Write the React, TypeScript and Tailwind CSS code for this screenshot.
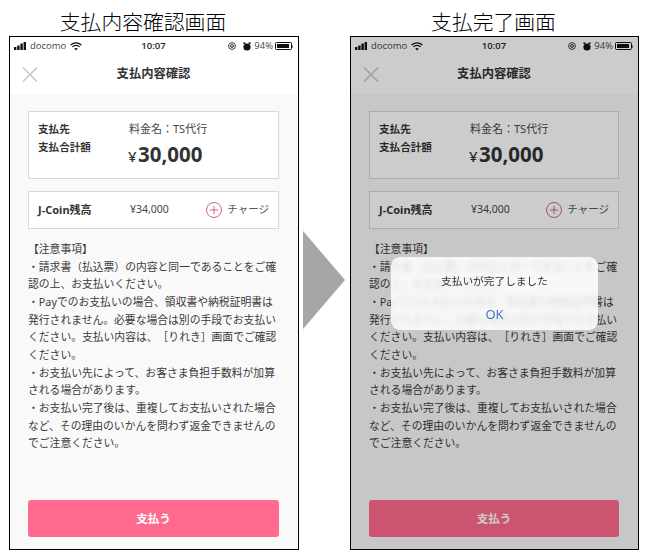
const FONT = "font-['Noto_Sans','Noto_Sans_CJK_JP',sans-serif]";

const NOTES = [
  '【注意事項】',
  '・請求書（払込票）の内容と同一であることをご確認の上、お支払いください。',
  '・Payでのお支払いの場合、領収書や納税証明書は発行されません。必要な場合は別の手段でお支払いください。支払い内容は、［りれき］画面でご確認ください。',
  '・お支払い先によって、お客さま負担手数料が加算される場合があります。',
  '・お支払い完了後は、重複してお支払いされた場合など、その理由のいかんを問わず返金できませんのでご注意ください。',
];

function StatusBar() {
  return (
    <div className="h-[18px] px-[4px] grid grid-cols-[1fr_auto_1fr] items-center text-[9.5px] text-[#444] font-['Open_Sans',sans-serif]">
      <div className="flex items-center gap-[2px]">
        <svg width="14" height="8" viewBox="0 0 14 8" fill="#111">
          <rect x="0" y="5" width="2.4" height="3" />
          <rect x="3.2" y="3.5" width="2.4" height="4.5" />
          <rect x="6.4" y="1.5" width="2.4" height="6.5" />
          <rect x="9.6" y="0" width="2.4" height="8" />
        </svg>
        <span>docomo</span>
        <svg width="12" height="9" viewBox="0 0 12 9" fill="none" stroke="#111" className="ml-[2px]">
          <path d="M0.6 3 Q6 -1.2 11.4 3" strokeWidth="1.4" />
          <path d="M2.4 4.8 Q6 2 9.6 4.8" strokeWidth="1.4" />
          <path d="M6 8.6 L4.2 6.6 Q6 5.4 7.8 6.6 Z" fill="#111" stroke="none" />
        </svg>
      </div>
      <span className="text-[9.5px] font-semibold text-[#222] -ml-[1px]">10:07</span>
      <div className="flex items-center justify-end gap-[2px] pr-[1px]">
        <svg width="8" height="8" viewBox="0 0 8 8" fill="none" stroke="#222">
          <circle cx="4" cy="4" r="3.4" strokeWidth="0.9" />
          <circle cx="4" cy="4" r="1.4" strokeWidth="1" />
        </svg>
        <svg width="8" height="9" viewBox="0 0 8 9" fill="#111" className="ml-[5px]">
          <circle cx="4" cy="5" r="3.6" />
          <rect x="0.4" y="0.4" width="2" height="1.6" />
          <rect x="5.6" y="0.4" width="2" height="1.6" />
        </svg>
        <span className="ml-[1px]">94%</span>
        <div className="flex items-center">
          <div className="w-[17px] h-[8px] rounded-[1.5px] border border-[#111] p-[1px]">
            <div className="w-[94%] h-full bg-[#111]" />
          </div>
          <div className="w-[1px] h-[3px] bg-[#888]" />
        </div>
      </div>
    </div>
  );
}

function Phone({ dimmed = false }: { dimmed?: boolean }) {
  return (
    <div className={`relative h-[514px] border border-black bg-white flex flex-col overflow-hidden ${FONT}`}>
      <StatusBar />
      <div className="h-[39px] grid grid-cols-[1fr_auto_1fr] items-center">
        <svg width="16" height="15" viewBox="0 0 16 15" stroke="#c9c9c9" strokeWidth="1.6" className="ml-[12px]">
          <path d="M1 0.5 L15 14.5 M15 0.5 L1 14.5" />
        </svg>
        <span className="text-[12.3px] font-bold text-[#333] -ml-[1px]">支払内容確認</span>
        <span />
      </div>

      <div className="flex-1 bg-[#faf9fa] pl-[18px] pr-[19px] pt-[17px]">
        <div className="h-[68px] bg-white border border-[#d8d8d8] pl-[9px] pt-[8px] grid grid-cols-[91px_1fr]">
          <div className="text-[10.6px] font-bold text-[#333] leading-[18px]">
            <p>支払先</p>
            <p>支払合計額</p>
          </div>
          <div className="text-[#444]">
            <p className="text-[11px] leading-[18px]">料金名：TS代行</p>
            <p className="flex items-baseline text-[#333] leading-[28px] mt-[2px]">
              <span className="text-[15px] font-medium -ml-[1px] w-[10px]">¥</span>
              <span className="text-[20.5px] font-bold">30,000</span>
            </p>
          </div>
        </div>

        <div className="mt-[12px] h-[38px] bg-white border border-[#d8d8d8] pl-[9px] pr-[9px] grid grid-cols-[91px_1fr_auto] items-center">
          <span className="text-[11px] font-bold text-[#333]">J-Coin残高</span>
          <span className="text-[10.5px] text-[#444] ml-[1px]">¥34,000</span>
          <div className="flex items-center gap-[5px]">
            <svg width="16" height="16" viewBox="0 0 16 16" fill="none" stroke="#c9527a" strokeWidth="0.9">
              <circle cx="8" cy="8" r="7.5" />
              <path d="M8 4 V12 M4 8 H12" />
            </svg>
            <span className="text-[10.5px] text-[#555]">チャージ</span>
          </div>
        </div>

        <div className="mt-[11px] -mr-[1px] text-[10.8px] leading-[17.65px] text-[#3a3a3a] [text-spacing-trim:space-all]">
          {NOTES.map((line) => (
            <p key={line}>{line}</p>
          ))}
        </div>
      </div>

      <div className="h-[56px] bg-[#faf9fa] pl-[18px] pr-[19px] pt-[7px]">
        <div className="h-[37px] rounded-[3px] bg-[#ff6a8e] flex items-center justify-center text-[11.5px] font-bold text-white">
          支払う
        </div>
      </div>

      {dimmed && (
        <div className="absolute inset-0 bg-black/20 flex justify-center pt-[220px]">
          <div className="w-[207px] h-[73px] rounded-[9px] bg-white/85 backdrop-blur-[2px] flex flex-col items-center">
            <p className="mt-[15px] text-[10.7px] leading-[18px] text-[#333]">支払いが完了しました</p>
            <p className="mt-[15px] text-[13px] leading-[18px] text-[#3f78c9]">OK</p>
          </div>
        </div>
      )}
    </div>
  );
}

export default function App() {
  return (
    <div className="w-[648px] h-[560px] bg-white pl-[9px] flex font-['Noto_Sans_CJK_JP',sans-serif]">
      <div className="w-[290px]">
        <h1 className="h-[36px] pr-[22px] text-center text-[20.8px] font-light leading-[43px] text-black">支払内容確認画面</h1>
        <Phone />
      </div>
      <div className="w-[51px] pl-[4px] pt-[231px]">
        <svg width="42" height="98" viewBox="0 0 42 98" fill="#a6a6a6">
          <path d="M0 0 L42 49 L0 98 Z" />
        </svg>
      </div>
      <div className="w-[289px]">
        <h1 className="h-[36px] pr-[2px] text-center text-[20.8px] font-light leading-[43px] text-black">支払完了画面</h1>
        <Phone dimmed />
      </div>
    </div>
  );
}
